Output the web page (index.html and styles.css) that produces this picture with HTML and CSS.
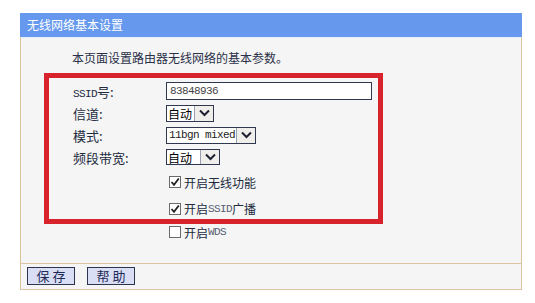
FILE: index.html
```html
<!DOCTYPE html>
<html lang="zh-CN">
<head>
  <meta charset="UTF-8">
  <title>无线网络基本设置</title>
  <link rel="stylesheet" href="styles.css">
</head>
<body>
  <div class="panel">
    <div class="panel-title">无线网络基本设置</div>
    <div class="panel-body">
      <p class="intro">本页面设置路由器无线网络的基本参数。</p>

      <div class="form">
        <div class="row">
          <span class="label"><span class="en">SSID</span>号:</span>
          <span class="field text"><span class="en">83848936</span></span>
        </div>
        <div class="row">
          <span class="label">信道:</span>
          <span class="field select w-channel"><span class="value">自动</span><span class="arrow"><svg width="11" height="8" viewBox="0 0 11 8"><path d="M1 1.5 L5.5 6 L10 1.5" fill="none" stroke="#1c2030" stroke-width="2"/></svg></span></span>
        </div>
        <div class="row">
          <span class="label">模式:</span>
          <span class="field select w-mode"><span class="value en">11bgn mixed</span><span class="arrow"><svg width="11" height="8" viewBox="0 0 11 8"><path d="M1 1.5 L5.5 6 L10 1.5" fill="none" stroke="#1c2030" stroke-width="2"/></svg></span></span>
        </div>
        <div class="row">
          <span class="label">频段带宽:</span>
          <span class="field select w-band"><span class="value">自动</span><span class="arrow"><svg width="11" height="8" viewBox="0 0 11 8"><path d="M1 1.5 L5.5 6 L10 1.5" fill="none" stroke="#1c2030" stroke-width="2"/></svg></span></span>
        </div>
        <div class="row check-row first">
          <span class="label"></span>
          <span class="check"><span class="box"><svg width="10" height="10" viewBox="0 0 10 10"><path d="M1.5 5 L4 7.8 L8.8 1.5" fill="none" stroke="#222" stroke-width="1.8"/></svg></span>开启无线功能</span>
        </div>
        <div class="row check-row">
          <span class="label"></span>
          <span class="check"><span class="box"><svg width="10" height="10" viewBox="0 0 10 10"><path d="M1.5 5 L4 7.8 L8.8 1.5" fill="none" stroke="#222" stroke-width="1.8"/></svg></span>开启<span class="en muted">SSID</span>广播</span>
        </div>
        <div class="row check-row last">
          <span class="label"></span>
          <span class="check"><span class="box"></span>开启<span class="en muted">WDS</span></span>
        </div>
      </div>

      <div class="highlight"></div>
    </div>
    <div class="panel-foot">
      <button class="btn">保 存</button>
      <button class="btn">帮 助</button>
    </div>
  </div>
</body>
</html>
```

FILE: styles.css
```css
* {
  box-sizing: border-box;
}

body {
  margin: 0;
  background: #fff;
  font-family: "Noto Sans CJK SC", "Liberation Sans", sans-serif;
  font-size: 12px;
  color: #222a40;
}

.panel {
  margin: 13px 0 0 20px;
  width: 502px;
}

.panel-title {
  height: 24px;
  line-height: 24px;
  padding-left: 7px;
  background: #6699ee;
  color: #fff;
  font-size: 12px;
}

.panel-body {
  position: relative;
  height: 227px;
  background: #f5f5f5;
  border-left: 1px solid #dcc4a0;
  border-right: 1px solid #dcc4a0;
  border-top: 1px solid #e6eefc;
  border-bottom: 1px solid #dcc4a0;
}

.intro {
  margin: 12px 0 0 51px;
  line-height: 16px;
  font-size: 12px;
  color: #2a3048;
}

.form {
  margin: 14px 0 0 52px;
}

.row {
  display: flex;
  align-items: center;
  height: 22px;
  white-space: nowrap;
}

.row:first-child {
  height: 22px;
}

.check-row.first {
  height: 28px;
}

.check-row {
  height: 25px;
}

.check-row.last {
  height: 22px;
}

.label {
  width: 93px;
  font-size: 13px;
  color: #222a40;
}

.en {
  font-family: "Liberation Mono", "DejaVu Sans Mono", monospace;
  font-size: 11px;
  letter-spacing: -0.6px;
}

.muted {
  color: #555c70;
}

.field {
  display: flex;
  align-items: stretch;
  background: #fff;
  border: 1px solid #2f3850;
}

.text {
  width: 206px;
  height: 18px;
  align-items: center;
  padding-left: 3px;
  color: #444;
}

.select {
  height: 17px;
  font-size: 12px;
  color: #000;
}

.select .value {
  flex: 1;
  display: flex;
  align-items: center;
  padding-left: 1px;
  overflow: hidden;
}

.select .value.en {
  padding-left: 2px;
  color: #222;
}

.select .arrow {
  width: 19px;
  flex: none;
  display: flex;
  align-items: center;
  justify-content: center;
  background: #f0eeea;
  border-left: 1px solid #9aa0b0;
}

.w-channel { width: 48px; }
.w-mode { width: 90px; }
.w-band { width: 54px; height: 16px; }

.check {
  display: flex;
  align-items: center;
  margin-left: 3px;
  font-size: 12px;
  color: #222a40;
}

.box {
  width: 12px;
  height: 12px;
  margin-right: 3px;
  border: 1px solid #6a6a6a;
  background: #fff;
  display: flex;
  align-items: center;
  justify-content: center;
}

.highlight {
  position: absolute;
  left: 23px;
  top: 35px;
  width: 339px;
  height: 151px;
  border: 5px solid #d8232c;
}

.panel-foot {
  height: 26px;
  padding: 3px 0 0 6px;
  background: #f5f5f5;
  border-left: 1px solid #dcc4a0;
  border-right: 1px solid #dcc4a0;
  border-bottom: 1px solid #dcc4a0;
  display: flex;
  align-items: flex-start;
  gap: 12px;
}

.btn {
  width: 48px;
  height: 18px;
  padding: 0;
  background: #dadef4;
  border: 1px solid #2c3450;
  color: #1c2a58;
  font-family: "Noto Sans CJK SC", sans-serif;
  font-size: 13px;
  line-height: 16px;
}
```
